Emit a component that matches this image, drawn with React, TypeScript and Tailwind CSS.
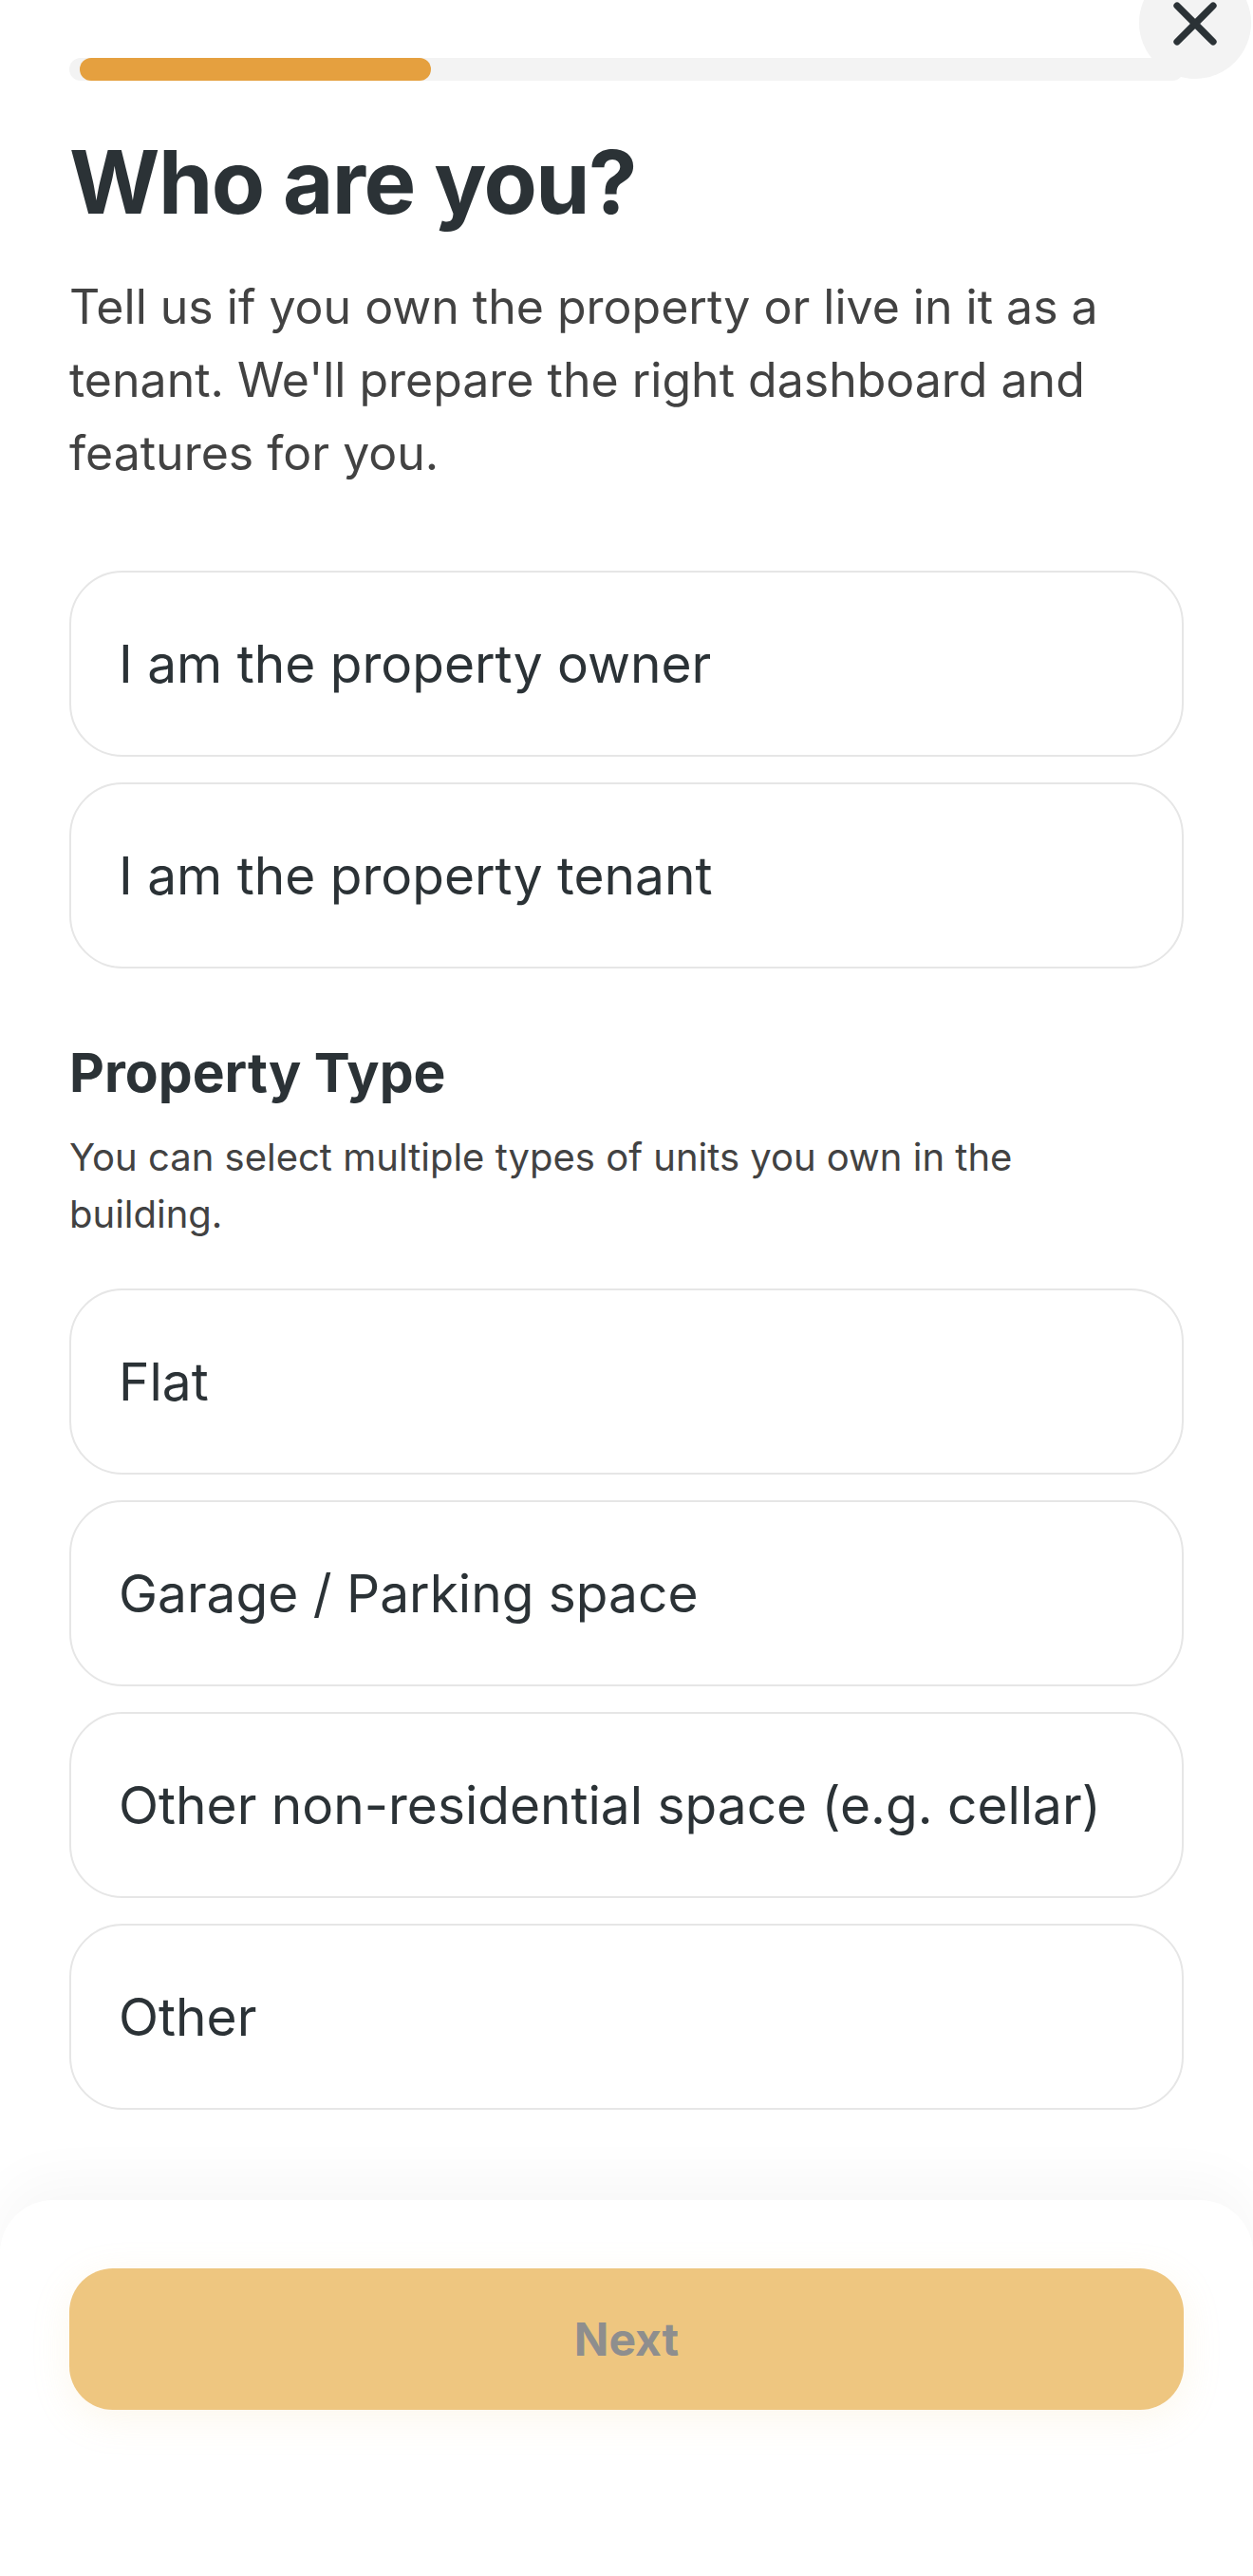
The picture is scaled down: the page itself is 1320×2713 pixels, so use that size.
import { X } from "lucide-react";

const ownerOptions = ["I am the property owner", "I am the property tenant"];

const propertyTypes = [
  "Flat",
  "Garage / Parking space",
  "Other non-residential space (e.g. cellar)",
  "Other",
];

const OptionCard = ({ label }: { label: string }) => {
  return (
    <button className="flex h-[196px] w-full items-center rounded-[56px] border-2 border-[#e6e6e6] bg-white px-[50px] text-left text-[55px] text-[#2b3236]">
      {label}
    </button>
  );
};

export default function App() {
  return (
    <div
      className="relative flex min-h-[2713px] flex-col overflow-hidden bg-white"
      style={{ fontFamily: "Inter, 'Noto Sans', sans-serif" }}
    >
      {/* close */}
      <button className="absolute right-[2px] top-[-35px] flex h-[118px] w-[118px] items-center justify-center rounded-full bg-[#f3f3f3] pt-[2px]">
        <X size={76} strokeWidth={2.3} className="text-[#2b3236]" />
      </button>

      <div className="flex flex-1 flex-col px-[73px] pt-[61px]">
        {/* progress */}
        <div className="h-[24px] w-full rounded-full bg-[#f3f3f3] pl-[11px]">
          <div className="h-[24px] w-[370px] rounded-full bg-[#e5a03f]" />
        </div>

        <h1 className="mt-[52px] text-[92px] font-bold leading-[1.2] tracking-[-1.5px] text-[#2b3236]">
          Who are you?
        </h1>
        <p className="mt-[38px] text-[50px] leading-[77px] text-[#424242]">
          Tell us if you own the property or live in it as a tenant. We'll
          prepare the right dashboard and features for you.
        </p>

        <div className="mt-[85px] flex flex-col gap-[27px]">
          {ownerOptions.map((o) => (
            <OptionCard key={o} label={o} />
          ))}
        </div>

        <h2 className="mt-[76px] text-[57px] font-bold leading-[1.2] text-[#2b3236]">
          Property Type
        </h2>
        <p className="mt-[24px] max-w-[1100px] text-[40px] leading-[60px] text-[#424242]">
          You can select multiple types of units you own in the building.
        </p>

        <div className="mt-[48px] flex flex-col gap-[27px]">
          {propertyTypes.map((t) => (
            <OptionCard key={t} label={t} />
          ))}
        </div>
      </div>

      {/* bottom sheet */}
      <div className="mt-[88px] h-[396px] rounded-t-[56px] bg-white px-[73px] pt-[72px] shadow-[0_-20px_60px_rgba(0,0,0,0.035)]">
        <button className="flex h-[149px] w-full items-center justify-center rounded-[46px] bg-[#eec680] text-[48px] font-bold text-[#8e8e8e] shadow-[0_10px_40px_rgba(238,198,128,0.15)]">
          Next
        </button>
      </div>
    </div>
  );
}
